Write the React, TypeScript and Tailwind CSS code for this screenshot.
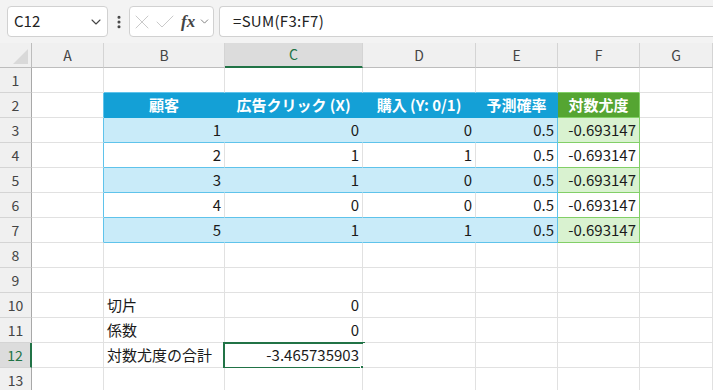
import { ChevronDown, X, Check, EllipsisVertical } from "lucide-react";

const FONT = "font-['Noto_Sans_CJK_JP','Noto_Sans',sans-serif]";

const cols = ["A", "B", "C", "D", "E", "F", "G"];
const widths = ["w-[72px]", "w-[121px]", "w-[138px]", "w-[113px]", "w-[82px]", "w-[82px]", "w-[73px]"];

// row number -> cell texts for A..G
const data: Record<number, string[]> = {
  2: ["", "顧客", "広告クリック (X)", "購入 (Y: 0/1)", "予測確率", "対数尤度", ""],
  3: ["", "1", "0", "0", "0.5", "-0.693147", ""],
  4: ["", "2", "1", "1", "0.5", "-0.693147", ""],
  5: ["", "3", "1", "0", "0.5", "-0.693147", ""],
  6: ["", "4", "0", "0", "0.5", "-0.693147", ""],
  7: ["", "5", "1", "1", "0.5", "-0.693147", ""],
  10: ["", "切片", "0", "", "", "", ""],
  11: ["", "係数", "0", "", "", "", ""],
  12: ["", "対数尤度の合計", "-3.465735903", "", "", "", ""],
};

function cellClass(r: number, c: number) {
  const inTable = r >= 2 && r <= 7;
  const striped = r === 3 || r === 5 || r === 7;

  let bg = "bg-white";
  let br = "border-r-[#e1e1e1]";
  let bb = "border-b-[#e1e1e1]";

  if (c === 0 && inTable) br = "border-r-[#5fc3eb]";
  if (r === 1 && c >= 1 && c <= 4) bb = "border-b-[#5fc3eb]";
  if (r === 1 && c === 5) bb = "border-b-[#82cf67]";

  if (r === 2 && c >= 1 && c <= 4) {
    bg = "bg-[#14a0d6]";
    br = "border-r-[#14a0d6]";
    bb = "border-b-[#14a0d6]";
  }
  if (r >= 3 && r <= 7 && c >= 1 && c <= 4) {
    bb = "border-b-[#5fc3eb]";
    if (striped) {
      bg = "bg-[#c9ebf9]";
      br = c === 4 ? "border-r-[#5fc3eb]" : "border-r-[#c9ebf9]";
    } else if (c === 4) {
      br = "border-r-[#5fc3eb]";
    }
  }
  if (c === 5 && inTable) {
    br = "border-r-[#82cf67]";
    bb = "border-b-[#82cf67]";
    if (r === 2) bg = "bg-[#55a532]";
    if (striped) bg = "bg-[#d9f2d0]";
  }
  return `${bg} ${br} ${bb}`;
}

function Toolbar() {
  return (
    <div className="flex h-[43px] items-start bg-[#f3f3f3] pt-[6px] pl-[7px]">
      <div className="flex h-[31px] w-[101px] items-center justify-between rounded-[4px] border border-[#d1d1d1] bg-white pl-[6px] pr-[3px]">
        <span className="text-[15px] text-[#222]">C12</span>
        <ChevronDown size={16} strokeWidth={1.6} className="text-[#444]" />
      </div>
      <div className="flex h-[31px] w-[21px] items-center justify-center">
        <EllipsisVertical size={16} strokeWidth={2.6} className="text-[#444]" />
      </div>
      <div className="flex h-[31px] w-[85px] items-center rounded-[4px] border border-[#d1d1d1] bg-white pl-0">
        <X size={24} strokeWidth={0.9} className="text-[#c4c4c4]" />
        <Check size={24} strokeWidth={0.9} className="-ml-[1px] text-[#c4c4c4]" />
        <span className="ml-[4px] font-['Liberation_Serif',serif] text-[17px] font-bold italic text-[#444]">fx</span>
        <ChevronDown size={13} strokeWidth={1.5} className="ml-[3px] text-[#666]" />
      </div>
      <div className="ml-[5px] flex h-[31px] flex-1 items-center rounded-l-[4px] border border-r-0 border-[#d1d1d1] bg-white pl-[13px]">
        <span className="text-[15px] tracking-[0.3px] text-[#222]">=SUM(F3:F7)</span>
      </div>
    </div>
  );
}

function ColumnHeader() {
  return (
    <div className="flex h-[25px]">
      <div className="relative w-[32px] border-r border-b border-[#bdbdbd] bg-[#f0f0f0]">
        <div className="absolute right-[3px] bottom-[3px] h-0 w-0 border-b-[15px] border-l-[15px] border-b-[#d9d9d9] border-l-transparent" />
      </div>
      {cols.map((c, i) =>
        c === "C" ? (
          <div
            key={c}
            className={`${widths[i]} flex items-center justify-center border-r border-b-2 border-r-[#d4d4d4] border-b-[#217346] bg-[#dcdcdc] pb-[1px] text-[14px] text-[#217346]`}
          >
            {c}
          </div>
        ) : (
          <div
            key={c}
            className={`${widths[i]} flex items-center justify-center border-r border-b border-r-[#d4d4d4] border-b-[#bdbdbd] bg-[#f0f0f0] text-[14px] text-[#444]`}
          >
            {c}
          </div>
        )
      )}
    </div>
  );
}

function Row({ r }: { r: number }) {
  const texts = data[r] || ["", "", "", "", "", "", ""];
  const selected = r === 12;
  return (
    <div className="flex h-[25px]">
      <div
        className={
          selected
            ? "flex w-[32px] items-center justify-center border-r-2 border-b border-r-[#217346] border-b-[#d4d4d4] bg-[#dcdcdc] text-[14px] text-[#217346]"
            : "flex w-[32px] items-center justify-center border-r border-b border-r-[#a8a8a8] border-b-[#d4d4d4] bg-[#f0f0f0] text-[14px] text-[#444]"
        }
      >
        {r}
      </div>
      {texts.map((t, c) => {
        const header = r === 2 && c >= 1 && c <= 5;
        const isLabel = r >= 10 && c === 1;
        const align = header ? "justify-center" : isLabel ? "justify-start pl-[3px]" : "justify-end pr-[3px]";
        const txt = header ? "font-bold text-white" : "text-[#1a1a1a]";
        return (
          <div
            key={c}
            className={`${widths[c]} relative flex items-center whitespace-nowrap border-r border-b text-[15px] ${align} ${txt} ${cellClass(r, c)}`}
          >
            {t}
            {selected && c === 2 && (
              <>
                <div className="pointer-events-none absolute -top-[1px] -right-[3px] -bottom-[2px] -left-[2px] border-2 border-[#217346]" />
                <div className="absolute -right-[5px] -bottom-[5px] h-[7px] w-[7px] border border-white bg-[#217346]" />
              </>
            )}
          </div>
        );
      })}
    </div>
  );
}

export default function App() {
  const rows = [1, 2, 3, 4, 5, 6, 7, 8, 9, 10, 11, 12, 13];
  return (
    <div className={`h-[390px] w-[713px] overflow-hidden bg-white ${FONT}`}>
      <Toolbar />
      <ColumnHeader />
      {rows.map((r) => (
        <Row key={r} r={r} />
      ))}
    </div>
  );
}
